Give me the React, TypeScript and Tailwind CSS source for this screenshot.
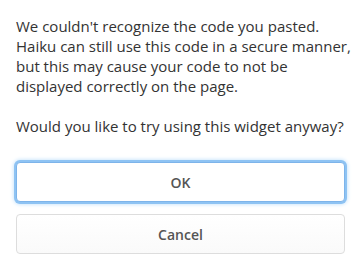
export default function App() {
  return (
    <div className="w-[361px] h-[268px] bg-white px-4 pt-[16px] font-['Open_Sans',sans-serif] text-[#333]">
      <p className="whitespace-nowrap text-[15px] leading-[20px]">
        We couldn't recognize the code you pasted.
        <br />
        Haiku can still use this code in a secure manner,
        <br />
        but this may cause your code to not be
        <br />
        displayed correctly on the page.
      </p>
      <p className="mt-5 whitespace-nowrap text-[15px] leading-[20px]">Would you like to try using this widget anyway?</p>
      <div className="mt-[26px] flex flex-col gap-3">
        <button className="h-[40px] w-full rounded-[4px] border border-[#7db4ea] bg-white text-[14px] font-semibold text-[#555] shadow-[0_0_0_2px_#8ec3f3,0_0_4px_2px_#b9dcfa]">
          OK
        </button>
        <button className="h-[40px] w-full rounded-[4px] border border-[#ddd] bg-gradient-to-b from-white to-[#fafafa] text-[14px] font-semibold text-[#555]">
          Cancel
        </button>
      </div>
    </div>
  )
}
